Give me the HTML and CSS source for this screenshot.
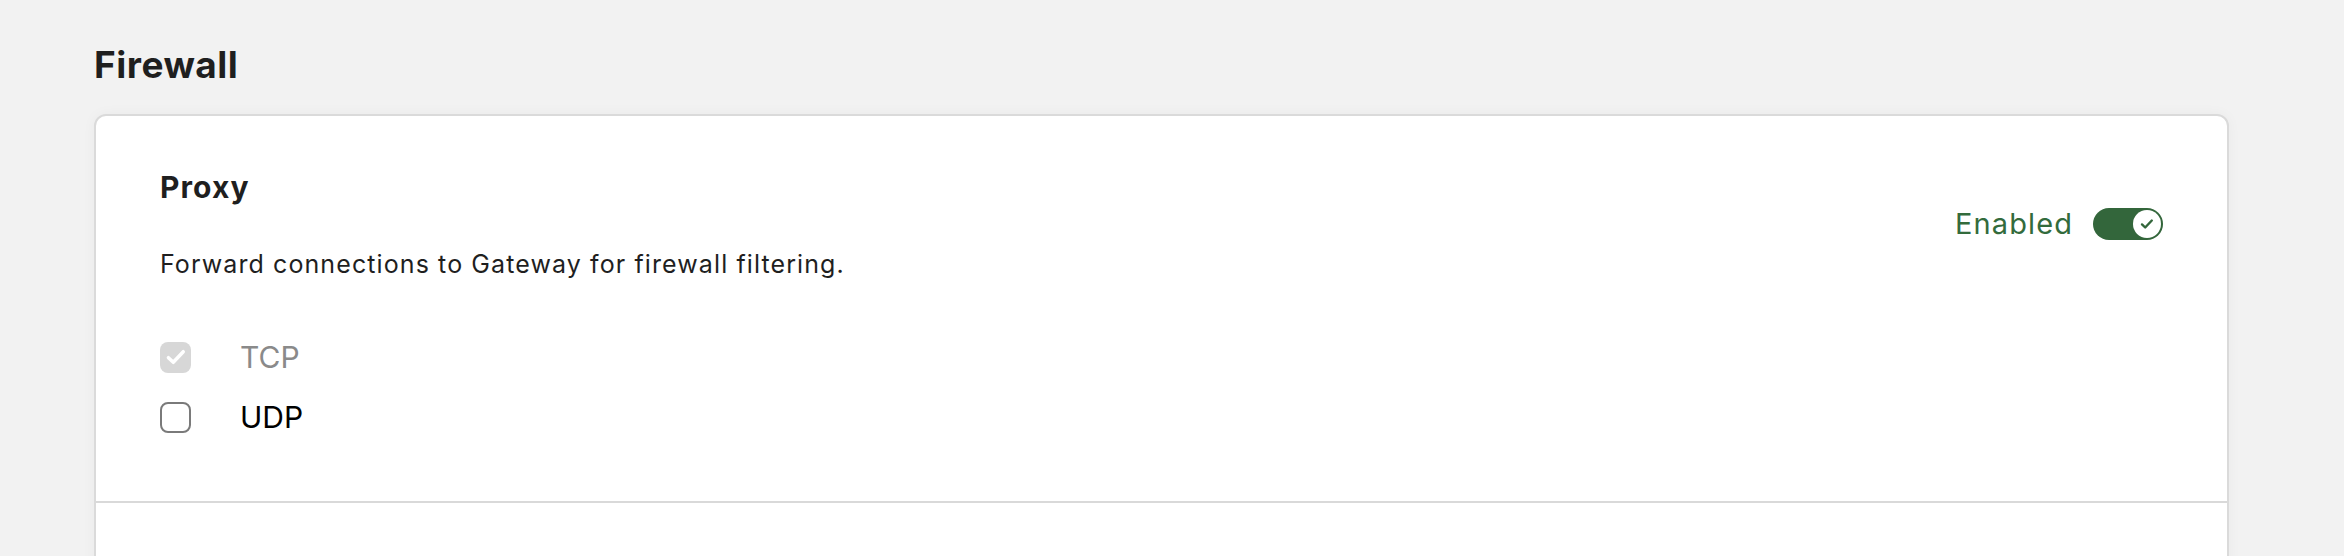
FILE: index.html
```html
<!DOCTYPE html>
<html lang="en">
<head>
    <meta charset="UTF-8">
    <title>Firewall</title>
<link rel="stylesheet" href="styles.css">
</head>
<body>
    <div class="page">
        <h1>Firewall</h1>

        <div class="card">
            <!-- Proxy section -->
            <div class="section">
                <div class="section-main">
                    <h2>Proxy</h2>
                    <p class="desc">Forward connections to Gateway for firewall filtering.</p>

                    <div class="options">
                        <label class="option disabled">
                            <span class="box checked">
                                <svg width="26" height="26" viewBox="0 0 24 24"><path d="M5 12.6l4.5 4.3 9.2-9.8" fill="none" stroke="#fff" stroke-width="3.2" stroke-linecap="round" stroke-linejoin="round"/></svg>
                            </span>
                            TCP
                        </label>
                        <label class="option">
                            <span class="box"></span>
                            UDP
                        </label>
                    </div>
                </div>

                <div class="status">
                    <span class="status-label">Enabled</span>
                    <span class="toggle">
                        <span class="knob">
                            <svg width="18" height="18" viewBox="0 0 18 18"><path d="M4 9.4l3.2 3.1 6.6-7" fill="none" stroke="#33663b" stroke-width="2.4" stroke-linecap="round" stroke-linejoin="round"/></svg>
                        </span>
                    </span>
                </div>
            </div>

            <div class="section next"></div>
        </div>
    </div>
</body>
</html>
```

FILE: styles.css
```css
body {
    margin: 0;
    background-color: #f2f2f2;
    font-family: Inter, "Noto Sans", sans-serif;
    color: #1f1f1f;
}

.page {
    padding: 43px 115px 0 94px;
}

h1 {
    font-size: 37px;
    font-weight: 700;
    letter-spacing: 0.5px;
    line-height: 44px;
    margin: 0 0 27px 0;
    color: #1f1f1f;
}

.card {
    background-color: #FFFFFF;
    border: 2px solid #dadada;
    border-radius: 12px;
    box-shadow: 0 0 14px rgba(0, 0, 0, 0.04);
}

.section {
    display: flex;
    justify-content: space-between;
    align-items: flex-start;
    padding: 53px 64px 62px 64px;
    border-bottom: 2px solid #d9d9d9;
}

.section.next {
    border-bottom: none;
    height: 120px;
    padding: 0;
}

h2 {
    font-size: 30px;
    font-weight: 700;
    letter-spacing: 1.1px;
    line-height: 36px;
    margin: 0;
}

.desc {
    font-size: 25px;
    letter-spacing: 1.1px;
    line-height: 32px;
    margin: 43px 0 0 0;
}

.options {
    margin-top: 55px;
    display: flex;
    flex-direction: column;
    gap: 16px;
}

.option {
    display: flex;
    align-items: center;
    height: 44px;
    font-size: 30px;
    color: #000;
}

.option.disabled {
    color: #8a8a8a;
}

.box {
    width: 31px;
    height: 31px;
    box-sizing: border-box;
    border: 2px solid #7a7a7a;
    border-radius: 8px;
    margin-right: 49px;
    display: flex;
    align-items: center;
    justify-content: center;
}

.box.checked {
    border: none;
    background-color: #d7d7d7;
}

/* Enabled switch */
.status {
    display: flex;
    align-items: center;
    gap: 20px;
    margin-top: 39px;
}

.status-label {
    font-size: 29px;
    letter-spacing: 1.1px;
    line-height: 32px;
    color: #336b3c;
}

.toggle {
    width: 70px;
    height: 32px;
    border-radius: 16px;
    background-color: #33663b;
    display: flex;
    align-items: center;
    justify-content: flex-end;
    padding: 0 2px;
    box-sizing: border-box;
}

.knob {
    width: 28px;
    height: 28px;
    border-radius: 50%;
    background-color: #FFFFFF;
    display: flex;
    align-items: center;
    justify-content: center;
}
```
